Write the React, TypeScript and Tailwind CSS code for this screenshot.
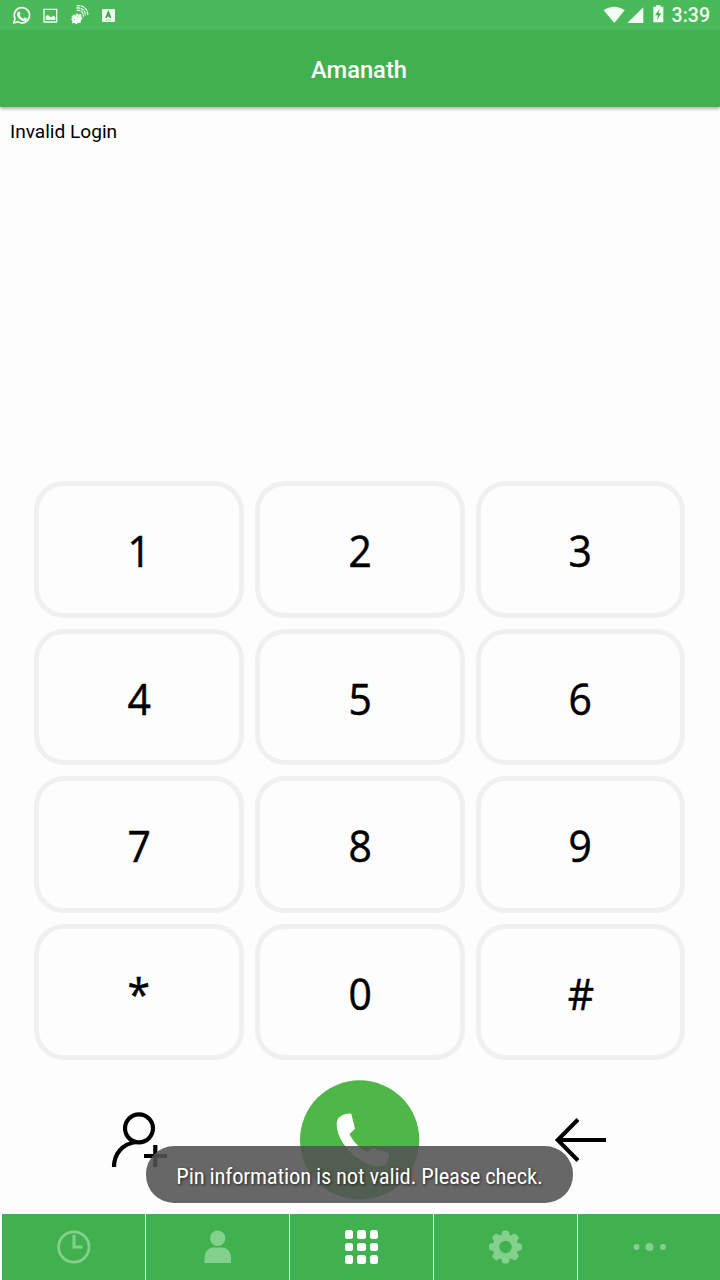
import React from "react";

const KEYS = ["1", "2", "3", "4", "5", "6", "7", "8", "9", "*", "0", "#"];

function StatusBar() {
  return (
    <div className="flex h-[30px] items-center bg-[#49b95a] text-[#f1fff1]">
      <svg width="130" height="30" viewBox="0 0 390 90" fill="none" stroke="currentColor">
        <path d="M41 69l4-13a23 23 0 1 1 8 9z" strokeWidth="5" strokeLinejoin="round" />
        <path d="M53 37c3-4 6-3 7 0l2 5-3 4c3 5 6 8 11 10l4-4 7 4c0 6-5 9-10 8-12-3-20-13-20-21 0-3 1-5 2-6z" fill="currentColor" stroke="none" />
        <path d="M132 28h38v38h-38z" strokeWidth="4" />
        <path d="M137 60v-11l7-4 8 7 9-5 5 5v8z" fill="currentColor" stroke="none" />
        <path d="M214 50l8-7 5 3 4-7 5 5 7-3 1 9 4 6-5 4-1 8-8 1-5 4-5-4-8 1 1-8-4-5 4-3z" fill="currentColor" stroke="none" />
        <path d="M221 56l4 4M231 50l4 3" stroke="#49b95a" strokeWidth="2" />
        <path d="M230 31c14-2 21 7 20 19M229 24c18-2 28 9 27 23M230 17c21-2 34 11 33 28" strokeWidth="4" strokeDasharray="11 2" />
        <rect x="306" y="27" width="39" height="39" rx="4" fill="currentColor" stroke="none" />
        <path d="M318 54l7-18 7 18M320 48h10" stroke="#37a64a" strokeWidth="5" />
        <path d="M317 60h17" stroke="#75c980" strokeWidth="2" />
      </svg>
      <div className="ml-auto flex items-center pr-[10px]">
        <svg width="75" height="30" viewBox="0 0 225 90" fill="currentColor" className="mr-[2px]">
          <path d="M26 31c20-14 43-14 63 0L58 69z" />
          <path d="M145 22v47H97z" />
          <path d="M175 20h8v-4h14v4h8v47h-30z" />
          <path d="M194 26l-14 20h9l-3 15 12-21h-8z" fill="#3aac4d" />
        </svg>
        <span className="pt-[2px] text-[19.5px] leading-[30px] font-medium">3:39</span>
      </div>
    </div>
  );
}

function Header() {
  return (
    <header className="relative flex h-[77px] items-center justify-center bg-[#41b150] pt-[4px] shadow-[0_2px_3px_rgba(0,0,0,0.3)]">
      <h1 className="pr-[2px] text-[23.7px] font-medium text-white">Amanath</h1>
    </header>
  );
}

function Keypad() {
  return (
    <div className="mt-[329px] ml-[34.4px] grid h-[579.4px] w-[651px] grid-cols-3 grid-rows-4 gap-[11px]">
      {KEYS.map((key) => (
        <button
          key={key}
          className="flex items-center justify-center rounded-[30px] border-[5px] border-[#f0f0f0] pt-[3px] font-['Open_Sans',sans-serif] text-[43px] leading-none text-black"
        >
          <span className="scale-x-95 [-webkit-text-stroke:0.5px_black]">{key}</span>
        </button>
      ))}
    </div>
  );
}

function Actions() {
  return (
    <div className="mt-[19.6px] flex h-[120px] items-center">
      <button aria-label="Add contact" className="ml-[110px]">
        <svg width="60" height="60" viewBox="0 0 60 60" fill="none" stroke="black" strokeWidth="4.2">
          <circle cx="29" cy="18.300" r="14" />
          <path d="M4 57c0-13 8-23 22-25M34 46h23M45.300 35v22" />
        </svg>
      </button>
      <button aria-label="Call" className="ml-[130px]">
        <svg width="120" height="120" viewBox="30 30 360 360">
          <circle cx="209" cy="210" r="179" fill="#4eb748" />
          <path
            d="M160 134Q172 130 184 131L195 176L178 193Q188 213 207 230Q217 241 232 246L249 235L297 250Q298 266 287 283Q267 294 241 286Q190 266 159 220Q139 188 140 158Q143 139 160 134z"
            fill="white"
          />
        </svg>
      </button>
      <button aria-label="Back" className="ml-[134px]">
        <svg width="54" height="48" viewBox="0 0 54 48" fill="none" stroke="black" strokeWidth="4">
          <path d="M24 3.500L3.700 24L24 44.500M4 24h48" />
        </svg>
      </button>
    </div>
  );
}

function Toast() {
  return (
    <div className="absolute top-[1146px] left-[146px] flex h-[57px] w-[427px] items-center justify-center rounded-[28px] bg-[#525252]/88 pt-1">
      <span className="text-[22.6px] tracking-[-0.18px] whitespace-nowrap text-white [font-stretch:75%] [text-shadow:1px_1px_3px_rgba(0,0,0,0.7)]">
        Pin information is not valid. Please check.
      </span>
    </div>
  );
}

function TabBar() {
  return (
    <nav className="mt-auto ml-[2px] flex h-[66px] divide-x divide-white bg-[#41b150] text-[#84d18e]">
      <button aria-label="Recents" className="flex w-[144px] items-center justify-center">
        <svg width="34" height="34" viewBox="0 0 34 34" fill="none" stroke="currentColor">
          <circle cx="16.800" cy="17" r="15.200" strokeWidth="2.700" />
          <path d="M17 5v12h8.500" strokeWidth="3" />
        </svg>
      </button>
      <button aria-label="Contacts" className="flex w-[144px] items-center justify-center">
        <svg width="34" height="34" viewBox="0 0 34 34" fill="currentColor">
          <circle cx="16.700" cy="8.300" r="7.700" />
          <path d="M3.500 33v-5c0-6 4-10.500 9-10.500h8.500c5 0 9 4.500 9 10.500v5z" />
        </svg>
      </button>
      <button aria-label="Keypad" className="flex w-[144px] items-center justify-center">
        <span className="grid grid-cols-3 gap-[4.2px]">
          {KEYS.slice(0, 9).map((key) => (
            <span key={key} className="size-[8.4px] rounded-[2.5px] bg-white" />
          ))}
        </span>
      </button>
      <button aria-label="Settings" className="flex w-[144px] items-center justify-center">
        <svg width="34" height="34" viewBox="-16.500 -17 34 34" fill="none" stroke="currentColor">
          <circle r="9.500" strokeWidth="6.500" />
          {[0, 45, 90, 135].map((deg) => (
            <g key={deg} transform={`rotate(${deg})`} fill="currentColor" stroke="none">
              <path d="M-4.300-11.500L-3-16Q0-17 3-16L4.300-11.500zM-4.300 11.500L-3 16Q0 17 3 16L4.300 11.500z" />
            </g>
          ))}
        </svg>
      </button>
      <button aria-label="More" className="flex flex-1 items-center justify-center">
        <svg width="34" height="12" viewBox="0 0 34 12" fill="currentColor">
          <circle cx="4.500" cy="6" r="2.900" />
          <circle cx="17.500" cy="6" r="4" />
          <circle cx="31" cy="6" r="2.900" />
        </svg>
      </button>
    </nav>
  );
}

export default function App() {
  return (
    <div className="relative flex h-[1280px] w-[720px] flex-col overflow-hidden bg-[#fdfdfd] font-[Roboto,sans-serif]">
      <StatusBar />
      <Header />
      <p className="mt-[10px] ml-[10px] h-[35px] text-[19.1px] leading-[29px] text-black">Invalid Login</p>
      <Keypad />
      <Actions />
      <TabBar />
      <Toast />
    </div>
  );
}
